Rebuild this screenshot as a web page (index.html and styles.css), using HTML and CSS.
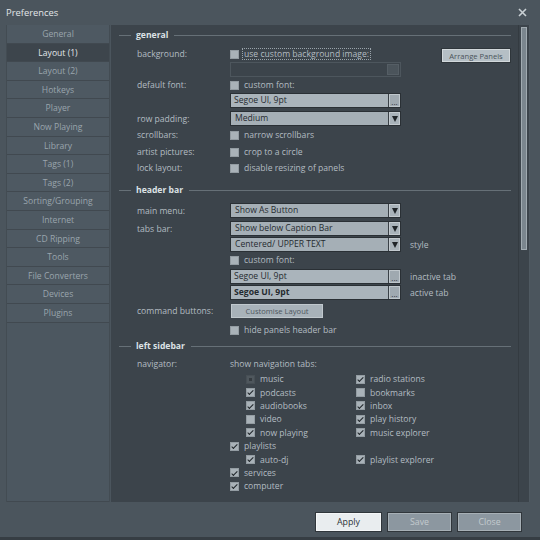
FILE: index.html
```html
<!DOCTYPE html>
<html>
<head>
<meta charset="utf-8">
<link rel="stylesheet" href="styles.css">
</head>
<body>
<div class="win">
  <div class="titlebar">
    <span class="title">Preferences</span>
    <svg class="close" width="9" height="9" viewBox="0 0 9 9"><path d="M1 1 L8 8 M8 1 L1 8" stroke="#c9d0d4" stroke-width="1.6" fill="none"/></svg>
  </div>
  <div class="main">
    <nav class="sidebar">
      <div class="nav-item">General</div>
      <div class="nav-item sel">Layout (1)</div>
      <div class="nav-item">Layout (2)</div>
      <div class="nav-item">Hotkeys</div>
      <div class="nav-item">Player</div>
      <div class="nav-item">Now Playing</div>
      <div class="nav-item">Library</div>
      <div class="nav-item">Tags (1)</div>
      <div class="nav-item">Tags (2)</div>
      <div class="nav-item">Sorting/Grouping</div>
      <div class="nav-item">Internet</div>
      <div class="nav-item">CD Ripping</div>
      <div class="nav-item">Tools</div>
      <div class="nav-item">File Converters</div>
      <div class="nav-item">Devices</div>
      <div class="nav-item">Plugins</div>
      <div class="nav-fill"></div>
    </nav>
    <div class="content">
      <div class="scroll-area">
        <div class="hdr"><span>general</span></div>
        <div class="row mt3">
          <span class="lbl">background:</span>
          <span class="cb"><i></i><span class="focus">use custom background image:</span></span>
          <span class="btn arrange">Arrange Panels</span>
        </div>
        <div class="row h15">
          <span class="lbl"></span>
          <span class="field dark"><span class="field-text"></span><span class="sq"></span></span>
        </div>
        <div class="row">
          <span class="lbl">default font:</span>
          <span class="cb"><i></i>custom font:</span>
        </div>
        <div class="row h15">
          <span class="lbl"></span>
          <span class="field"><span class="field-text">Segoe UI, 9pt</span><span class="dots">...</span></span>
        </div>
        <div class="row h15 mt3">
          <span class="lbl">row padding:</span>
          <span class="field sel-box"><span class="field-text">Medium</span><span class="arrow"><b></b></span></span>
        </div>
        <div class="row mt1">
          <span class="lbl">scrollbars:</span>
          <span class="cb"><i></i>narrow scrollbars</span>
        </div>
        <div class="row mt1">
          <span class="lbl">artist pictures:</span>
          <span class="cb"><i></i>crop to a circle</span>
        </div>
        <div class="row">
          <span class="lbl">lock layout:</span>
          <span class="cb"><i></i>disable resizing of panels</span>
        </div>

        <div class="hdr mt6"><span>header bar</span></div>
        <div class="row h15 mt5">
          <span class="lbl">main menu:</span>
          <span class="field sel-box"><span class="field-text">Show As Button</span><span class="arrow"><b></b></span></span>
        </div>
        <div class="row h15 mt3">
          <span class="lbl">tabs bar:</span>
          <span class="field sel-box"><span class="field-text">Show below Caption Bar</span><span class="arrow"><b></b></span></span>
        </div>
        <div class="row h15 mt1">
          <span class="lbl"></span>
          <span class="field sel-box"><span class="field-text">Centered/ UPPER TEXT</span><span class="arrow"><b></b></span></span>
          <span class="side">style</span>
        </div>
        <div class="row">
          <span class="lbl"></span>
          <span class="cb"><i></i>custom font:</span>
        </div>
        <div class="row h15 mt1">
          <span class="lbl"></span>
          <span class="field"><span class="field-text">Segoe UI, 9pt</span><span class="dots">...</span></span>
          <span class="side">inactive tab</span>
        </div>
        <div class="row h15 mt1">
          <span class="lbl"></span>
          <span class="field"><span class="field-text bold">Segoe UI, 9pt</span><span class="dots">...</span></span>
          <span class="side">active tab</span>
        </div>
        <div class="row h14 mt4">
          <span class="lbl">command buttons:</span>
          <span class="btn customise">Customise Layout</span>
        </div>
        <div class="row mt4">
          <span class="lbl"></span>
          <span class="cb"><i></i>hide panels header bar</span>
        </div>

        <div class="hdr"><span>left sidebar</span></div>
        <div class="row mt2">
          <span class="lbl">navigator:</span>
          <span>show navigation tabs:</span>
        </div>
        <div class="navgrid">
          <span class="cb ind dis"><i></i>music</span>
          <span class="cb on"><i></i>radio stations</span>
          <span class="cb ind on"><i></i>podcasts</span>
          <span class="cb"><i></i>bookmarks</span>
          <span class="cb ind on"><i></i>audiobooks</span>
          <span class="cb on"><i></i>inbox</span>
          <span class="cb ind"><i></i>video</span>
          <span class="cb on"><i></i>play history</span>
          <span class="cb ind on"><i></i>now playing</span>
          <span class="cb on"><i></i>music explorer</span>
          <span class="cb on"><i></i>playlists</span>
          <span></span>
          <span class="cb ind on"><i></i>auto-dj</span>
          <span class="cb on"><i></i>playlist explorer</span>
          <span class="cb on"><i></i>services</span>
          <span></span>
          <span class="cb on"><i></i>computer</span>
          <span></span>
        </div>
      </div>
      <div class="scrollbar"><div class="thumb"></div></div>
    </div>
  </div>
  <div class="footer">
    <span class="fbtn apply">Apply</span>
    <span class="fbtn">Save</span>
    <span class="fbtn">Close</span>
  </div>
</div>
</body>
</html>
```

FILE: styles.css
```css
* { box-sizing: border-box; margin: 0; padding: 0; }
html, body { width: 540px; height: 540px; overflow: hidden; }
body {
  background: #4b555d;
  font-family: "Open Sans", "Noto Sans", sans-serif;
  font-size: 8.6px;
  color: #b3bcc2;
}
.win { display: flex; flex-direction: column; height: 540px; }

.titlebar {
  height: 25px;
  display: flex;
  align-items: center;
  justify-content: space-between;
  padding: 0 13px 1px 6px;
}
.title { color: #e1e5e8; font-size: 9.4px; }

.main { height: 477px; display: flex; padding-left: 6px; }

.sidebar {
  width: 104px;
  display: flex;
  flex-direction: column;
  background: #4c5760;
  border-left: 1px solid #434c53;
  border-right: 1px solid #434c53;
}
.nav-item {
  height: 18.6px;
  flex-shrink: 0;
  line-height: 18px;
  text-align: center;
  background: #4e5962;
  border-bottom: 1px solid #414950;
  color: #9aa5ad;
}
.nav-item.sel { background: #3d454c; color: #e3e7ea; }
.nav-fill { flex: 1; border-bottom: 1px solid #414950; }

.content {
  width: 419px;
  margin-left: 1px;
  background: #3c444b;
  display: flex;
  overflow: hidden;
  border-right: 1px solid #4f5961;
}
.scroll-area { flex: 1; padding-top: 2px; overflow: hidden; }
.scrollbar { width: 11px; padding: 2px 2px 0 2px; border-left: 1px solid #343b41; }
.thumb { height: 223px; background: #7b868e; border: 1px solid #a1abb1; }

.hdr {
  display: flex;
  align-items: center;
  height: 16px;
  padding-left: 8px;
  padding-right: 7px;
  font-weight: bold;
  color: #dde2e5;
}
.hdr::before {
  content: "";
  width: 12px;
  height: 1px;
  background: #667077;
  margin-right: 5px;
}
.hdr::after {
  content: "";
  flex: 1;
  height: 1px;
  background: #667077;
  margin-left: 6px;
}

.row {
  display: flex;
  align-items: center;
  height: 16px;
  padding-left: 26px;
  padding-right: 8px;
}
.h15 { height: 15px; }
.h14 { height: 14px; }
.mt1 { margin-top: 1px; }
.mt2 { margin-top: 2px; }
.mt3 { margin-top: 3px; }
.mt4 { margin-top: 4px; }
.mt5 { margin-top: 5px; }
.mt6 { margin-top: 6px; }
.lbl { width: 93px; flex-shrink: 0; }

.cb { display: flex; align-items: center; white-space: nowrap; }
.cb i {
  position: relative;
  width: 9px;
  height: 9px;
  margin-right: 5px;
  background: #a9b2b8;
  border: 1px solid #939ca2;
  flex-shrink: 0;
}
.cb.on i::after {
  content: "";
  position: absolute;
  left: 2.3px;
  top: 0.2px;
  width: 2.4px;
  height: 4.8px;
  border: solid #22282c;
  border-width: 0 1.5px 1.5px 0;
  transform: rotate(45deg);
}
.cb.dis i { background: #4f575d; border-color: #474f55; }
.cb.dis i::after {
  content: "";
  position: absolute;
  left: 2px;
  top: 2px;
  width: 3px;
  height: 3px;
  background: #353b40;
}
.focus { border: 1px dotted #9aa4ab; padding: 0 1px; margin-left: -2px; line-height: 10px; }

.field {
  width: 171px;
  height: 15px;
  display: flex;
  background: #aab4bb;
  border: 1px solid #2a3035;
  color: #252b30;
}
.field-text { flex: 1; padding-left: 3px; line-height: 13px; white-space: nowrap; overflow: hidden; }
.field-text.bold { font-weight: bold; }
.field.sel-box { background: #a5afb6; }
.field.sel-box .field-text { padding-left: 4px; }
.field.dark { background: #3c444b; border-color: #4d565d; }
.sq { width: 12px; margin: 1px; background: #4b545b; border: 1px solid #555e65; }
.dots {
  width: 12px;
  border-left: 1px solid #3a4147;
  background: #9fa9b0;
  text-align: center;
  line-height: 15px;
  font-size: 8px;
  box-shadow: inset 0 0 0 1px #bfc7cc;
}
.arrow {
  width: 12px;
  border-left: 1px solid #3a4147;
  background: #a9b3ba;
  display: flex;
  align-items: center;
  justify-content: center;
  box-shadow: inset 0 0 0 1px #c3cacf;
}
.arrow b {
  width: 0;
  height: 0;
  border-left: 3.5px solid transparent;
  border-right: 3.5px solid transparent;
  border-top: 6px solid #1f2428;
}
.side { margin-left: 9px; white-space: nowrap; }

.btn {
  height: 13px;
  display: flex;
  align-items: center;
  justify-content: center;
  font-size: 7.6px;
  white-space: nowrap;
}
.arrange {
  margin-left: auto;
  align-self: flex-end;
  width: 68px;
  background: #b5bfc5;
  color: #4a535a;
  border: 1px solid #d2d8db;
  box-shadow: 0 0 0 1px #2f363b;
}
.customise {
  width: 92px;
  height: 14px;
  margin-left: 1px;
  background: #a8b2b9;
  color: #4f585f;
  border: 1px solid #c0c8cd;
}

.navgrid {
  display: grid;
  grid-template-columns: 126px auto;
  grid-auto-rows: 13.4px;
  padding-left: 119px;
  margin-top: 0.5px;
}
.navgrid .ind { margin-left: 16px; }

.footer {
  height: 38px;
  display: flex;
  justify-content: flex-end;
  align-items: flex-start;
  gap: 7px;
  padding: 11px 19px 0 0;
  border-bottom: 3px solid #363d43;
}
.fbtn {
  width: 63px;
  height: 18px;
  display: flex;
  align-items: center;
  justify-content: center;
  background: #8c97a0;
  color: #c3cace;
  border: 1px solid #a7b0b6;
  box-shadow: 0 0 0 1px #30363b;
  font-size: 8.8px;
}
.fbtn.apply {
  width: 65px;
  background: #e9edef;
  color: #2b3237;
  border-color: #f5f7f8;
}
```
